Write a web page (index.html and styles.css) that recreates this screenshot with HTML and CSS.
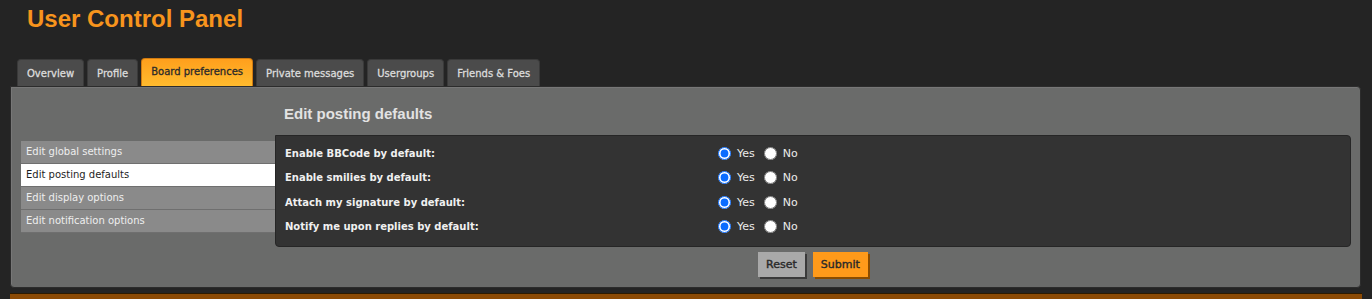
FILE: index.html
```html
<!DOCTYPE html>
<html lang="en">
<head>
  <meta charset="UTF-8">
  <title>User Control Panel</title>
  <link rel="stylesheet" href="styles.css">
</head>
<body>

<h1 class="page-title">User Control Panel</h1>

<ul class="tabs">
  <li class="tab">Overview</li>
  <li class="tab">Profile</li>
  <li class="tab active">Board preferences</li>
  <li class="tab">Private messages</li>
  <li class="tab">Usergroups</li>
  <li class="tab">Friends &amp; Foes</li>
</ul>

<div class="panel">
  <div class="side">
    <ul class="menu">
      <li class="menu-item">Edit global settings</li>
      <li class="menu-item current">Edit posting defaults</li>
      <li class="menu-item">Edit display options</li>
      <li class="menu-item">Edit notification options</li>
    </ul>
  </div>

  <div class="main">
    <h2 class="main-title">Edit posting defaults</h2>
    <div class="box">
      <div class="field">
        <label class="field-label">Enable BBCode by default:</label>
        <div class="choices">
          <label><input type="radio" name="bbcode" checked> Yes</label>
          <label><input type="radio" name="bbcode"> No</label>
        </div>
      </div>
      <div class="field">
        <label class="field-label">Enable smilies by default:</label>
        <div class="choices">
          <label><input type="radio" name="smilies" checked> Yes</label>
          <label><input type="radio" name="smilies"> No</label>
        </div>
      </div>
      <div class="field">
        <label class="field-label">Attach my signature by default:</label>
        <div class="choices">
          <label><input type="radio" name="sig" checked> Yes</label>
          <label><input type="radio" name="sig"> No</label>
        </div>
      </div>
      <div class="field">
        <label class="field-label">Notify me upon replies by default:</label>
        <div class="choices">
          <label><input type="radio" name="notify" checked> Yes</label>
          <label><input type="radio" name="notify"> No</label>
        </div>
      </div>
    </div>
    <div class="buttons">
      <button class="btn reset">Reset</button>
      <button class="btn submit">Submit</button>
    </div>
  </div>
</div>

<div class="footer-bar"></div>

</body>
</html>
```

FILE: styles.css
```css
:root {
  --page-bg: #242424;
  --orange: #f7941d;
  --tab-bg: #4b4b4b;
  --panel-bg: #6a6b6a;
  --box-bg: #333333;
  --text: #e6e6e6;
}

* {
  box-sizing: border-box;
}

body {
  margin: 0;
  padding: 0 10px 0 10px;
  background: var(--page-bg);
  font-family: 'DejaVu Sans', Verdana, sans-serif;
  font-size: 10px;
  color: var(--text);
}

.page-title {
  margin: 0;
  padding: 5px 0 0 17px;
  height: 59px;
  font-family: 'Liberation Sans', Arial, sans-serif;
  font-size: 24px;
  font-weight: bold;
  color: var(--orange);
}

.tabs {
  list-style: none;
  margin: 0;
  padding: 0 0 0 7px;
  display: flex;
  align-items: flex-end;
  gap: 3px;
  height: 27px;
}

.tab {
  height: 27px;
  padding: 0 9px;
  line-height: 27px;
  background: var(--tab-bg);
  border: 1px solid #3a3a3a;
  border-bottom: none;
  border-radius: 4px 4px 0 0;
  color: #dcdcdc;
  -webkit-text-stroke: 0.3px;
}

.tab.active {
  height: 28px;
  line-height: 26px;
  background: linear-gradient(#ff9f1c, #ffbb2e);
  border-color: #d07a10;
  color: #2a2a2a;
}

.panel {
  display: flex;
  background: var(--panel-bg);
  border: 1px solid #2c2c2c;
  border-radius: 0 4px 4px 4px;
  box-shadow: inset 1px 1px 0 #777;
  height: 202px;
  margin-right: 1px;
}

.side {
  width: 264px;
  padding: 54px 0 0 10px;
  flex-shrink: 0;
}

.menu {
  list-style: none;
  margin: 0;
  padding: 0;
}

.menu-item {
  height: 23px;
  line-height: 22px;
  padding-left: 5px;
  background: #8a8a8a;
  border-bottom: 1px solid #6f6f6f;
  color: #eeeeee;
}

.menu-item.current {
  background: #ffffff;
  color: #1e1e1e;
}

.main {
  flex: 1;
  padding-right: 9px;
}

.main-title {
  margin: 0;
  padding: 18px 0 0 9px;
  height: 48px;
  font-family: 'Liberation Sans', Arial, sans-serif;
  font-size: 15px;
  font-weight: bold;
  color: #e2e2e2;
}

.box {
  background: var(--box-bg);
  border: 1px solid #262626;
  border-radius: 0 4px 4px 4px;
  padding: 5px 0 4px 9px;
  height: 112px;
}

.field {
  display: flex;
  align-items: center;
  height: 24.5px;
}

.field-label {
  width: 433px;
  color: #f0f0f0;
  font-weight: bold;
}

.choices {
  display: flex;
  gap: 9px;
}

.choices label {
  display: flex;
  align-items: center;
  gap: 6px;
  color: #ececec;
  font-size: 11px;
}

.choices input {
  margin: 0;
  width: 13px;
  height: 13px;
  accent-color: #0a6cff;
}

.buttons {
  display: flex;
  justify-content: center;
  gap: 8px;
  padding-top: 5px;
}

.btn {
  height: 25px;
  padding: 0 8px;
  border: none;
  font-family: inherit;
  font-size: 11px;
  color: #2a2a2a;
  -webkit-text-stroke: 0.4px;
  box-shadow: 2px 2px 0 #3a3a3a;
}

.reset {
  background: #a9a9a9;
}

.submit {
  background: #ff9a1a;
  box-shadow: 2px 2px 0 #8a4c00;
}

.footer-bar {
  margin: 5px 0 0 0;
  height: 8px;
  background: #8b4a05;
  border-top: 1px solid #2c1a00;
}
```
